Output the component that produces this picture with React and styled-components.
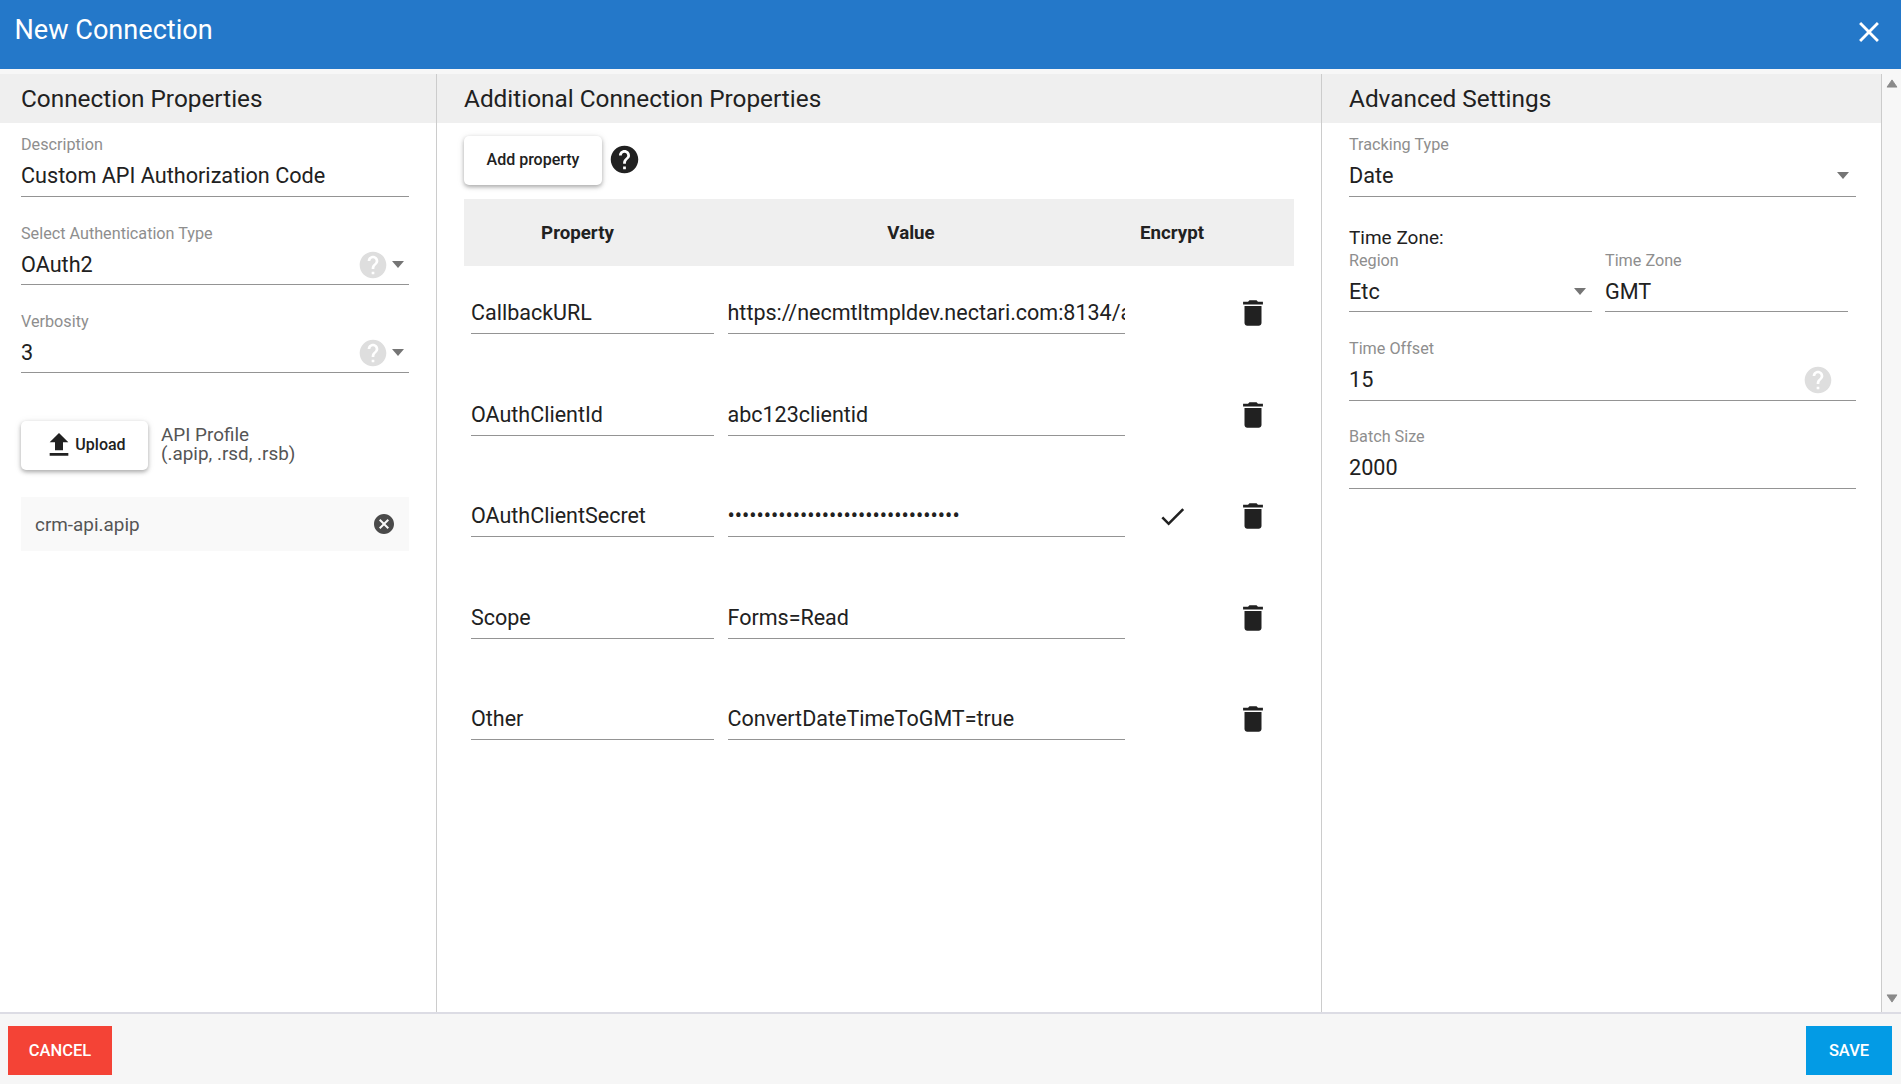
import React from "react";
import styled, { createGlobalStyle } from "styled-components";
import { MdDelete, MdCheck, MdHelp, MdClose, MdFileUpload, MdCancel } from "react-icons/md";

const Global = createGlobalStyle`
  html, body { margin: 0; padding: 0; height: 100%; overflow: hidden; background: #f7f7f7; }
  #root { height: 100%; }
  * { box-sizing: border-box; }
  body { font-family: Roboto, "Liberation Sans", sans-serif; color: #212121; }
`;

const Shell = styled.div`
  height: 1084px;
  display: flex;
  flex-direction: column;
`;
const TopBar = styled.header`
  height: 69px;
  flex: none;
  background: #2478c9;
  color: #fff;
  display: flex;
  justify-content: space-between;
  padding: 12px 15px 0 14.5px;
`;
const Title = styled.h1`
  margin: 0;
  font-size: 27.1px;
  line-height: 36px;
  font-weight: 400;
`;
const CloseButton = styled.button`
  border: 0;
  background: none;
  padding: 0;
  width: 34px;
  height: 34px;
  margin: 3px 0 0;
  color: #fff;
  font-size: 34px;
  display: flex;
`;
const Main = styled.main`
  flex: 1;
  min-height: 0;
  margin-top: 5px;
  display: flex;
`;
const Panel = styled.section`
  width: ${(p) => p.$width}px;
  flex: none;
  background: #fff;
  border-right: 1px solid #ccc;
`;
const PanelTitle = styled.h2`
  margin: 0;
  height: 49px;
  background: #efefef;
  font-size: 24.35px;
  line-height: 50px;
  font-weight: 400;
  padding-left: ${(p) => p.$inset}px;
`;
const PanelBody = styled.div`
  padding: ${(p) => p.$top}px ${(p) => p.$right}px 0 ${(p) => p.$left}px;
`;
const Field = styled.div`
  height: ${(p) => p.$height || 64}px;
  margin-bottom: ${(p) => p.$gap ?? 24}px;
  border-bottom: 1px solid #949494;
`;
const FieldLabel = styled.div`
  font-size: 16.2px;
  line-height: 24px;
  height: ${(p) => (p.$late ? 25 : 24)}px;
  padding-top: ${(p) => (p.$late ? 1 : 0)}px;
  color: #8e8e8e;
`;
const FieldRow = styled.div`
  display: flex;
  align-items: center;
  height: 37px;
`;
const FieldValue = styled.div`
  flex: 1;
  min-width: 0;
  font-size: 21.65px;
  line-height: 37px;
`;
const HintIcon = styled(MdHelp)`
  flex: none;
  font-size: 32px;
  color: #dedede;
  margin-right: ${(p) => p.$end || 3}px;
`;
const Caret = styled.svg`
  flex: none;
  width: 12px;
  height: 7px;
  margin-right: ${(p) => p.$end}px;
  fill: #757575;
`;
const UploadRow = styled.div`
  display: flex;
  align-items: center;
  gap: 13px;
  margin-top: 48px;
`;
const RaisedButton = styled.button`
  width: ${(p) => p.$width}px;
  height: 49px;
  flex: none;
  border: 0;
  border-radius: 5px;
  background: #fff;
  color: #212121;
  font: 500 16px Roboto, sans-serif;
  box-shadow: 0 2px 4px rgba(0, 0, 0, 0.3), 0 1px 8px rgba(0, 0, 0, 0.08);
  display: flex;
  align-items: center;
  justify-content: center;
  padding: 0 0 2px;
`;
const UploadGlyph = styled(MdFileUpload)`
  font-size: 32px;
`;
const UploadHint = styled.div`
  font-size: 18.9px;
  line-height: 19.5px;
  padding-bottom: 3px;
  color: #555;
`;
const FileChip = styled.div`
  margin-top: 27px;
  height: 54px;
  background: #f9f9f9;
  display: flex;
  align-items: center;
  justify-content: space-between;
  padding: 0 13px 0 14px;
  font-size: 18.9px;
  color: #555;
`;
const RemoveGlyph = styled(MdCancel)`
  font-size: 24px;
  color: #4a4a4a;
`;
const AddRow = styled.div`
  display: flex;
  align-items: center;
  gap: 6px;
`;
const DarkHelp = styled(MdHelp)`
  font-size: 33px;
  color: #212121;
  margin-bottom: 2px;
`;
const TableHead = styled.div`
  margin-top: 14px;
  height: 67px;
  background: #efefef;
  display: grid;
  grid-template-columns: 227px 440px 82px 81px;
  align-items: center;
  text-align: center;
  font-size: 18.7px;
  font-weight: 700;
`;
const RowList = styled.div`
  padding-top: 27px;
`;
const PropertyRow = styled.div`
  height: 101.5px;
  padding-left: 7px;
  display: grid;
  grid-template-columns: 243px 14px 397px 94px 68px;
  align-items: start;
`;
const CellInput = styled.div`
  grid-column: ${(p) => p.$col};
  height: 41px;
  border-bottom: 1px solid #949494;
  font-size: 21.5px;
  line-height: 40px;
  white-space: nowrap;
  overflow: hidden;
`;
const ValueInput = styled(CellInput)`
  text-indent: -0.5px;
`;
const IconCell = styled.div`
  grid-column: ${(p) => p.$col};
  height: 40px;
  display: flex;
  align-items: center;
  justify-content: center;
  color: #212121;
  font-size: ${(p) => p.$size}px;
`;
const TwoFields = styled.div`
  display: grid;
  grid-template-columns: 243px 243px;
  column-gap: 13px;
`;
const GroupTitle = styled.div`
  margin-top: 29px;
  height: 23px;
  font-size: 19px;
  line-height: 24px;
`;
const Scrollbar = styled.div`
  flex: 1;
  background: #f7f7f7;
  display: flex;
  flex-direction: column;
  justify-content: space-between;
  align-items: center;
  padding: 5px 0 9px;
`;
const ScrollArrow = styled.svg`
  width: 12px;
  height: 9px;
  fill: #8a8a8a;
  stroke: #8a8a8a;
  stroke-width: 1;
  stroke-linejoin: round;
`;
const Footer = styled.footer`
  height: 72px;
  flex: none;
  background: #f6f6f6;
  border-top: 2px solid #dcdce4;
  display: flex;
  justify-content: space-between;
  padding: 12px 9px 0 8px;
`;
const FlatButton = styled.button`
  width: ${(p) => p.$width}px;
  height: 49px;
  border: 0;
  background: ${(p) => p.$color};
  color: #fff;
  font: 500 16.5px Roboto, sans-serif;
  padding: 0;
`;

const CaretDown = ({ end = 6 }) => (
  <Caret $end={end} viewBox="0 0 12 7"><path d="M0 0h12L6 7z" /></Caret>
);

const rows = [
  { name: "CallbackURL", value: "https://necmtltmpldev.nectari.com:8134/api/oauth/callback" },
  { name: "OAuthClientId", value: "abc123clientid" },
  { name: "OAuthClientSecret", value: "•".repeat(32), secret: true },
  { name: "Scope", value: "Forms=Read" },
  { name: "Other", value: "ConvertDateTimeToGMT=true" },
];

export default function App() {
  return (
    <Shell>
      <Global />
      <TopBar>
        <Title>New Connection</Title>
        <CloseButton aria-label="Close"><MdClose /></CloseButton>
      </TopBar>
      <Main>
        <Panel $width={437}>
          <PanelTitle $inset={21}>Connection Properties</PanelTitle>
          <PanelBody $top={10} $left={21} $right={27}>
            <Field>
              <FieldLabel>Description</FieldLabel>
              <FieldRow><FieldValue>Custom API Authorization Code</FieldValue></FieldRow>
            </Field>
            <Field>
              <FieldLabel $late>Select Authentication Type</FieldLabel>
              <FieldRow><FieldValue>OAuth2</FieldValue><HintIcon /><CaretDown end={5} /></FieldRow>
            </Field>
            <Field>
              <FieldLabel $late>Verbosity</FieldLabel>
              <FieldRow><FieldValue>3</FieldValue><HintIcon /><CaretDown end={5} /></FieldRow>
            </Field>
            <UploadRow>
              <RaisedButton $width={127}><UploadGlyph />Upload</RaisedButton>
              <UploadHint>API Profile<br />(.apip, .rsd, .rsb)</UploadHint>
            </UploadRow>
            <FileChip>crm-api.apip<RemoveGlyph /></FileChip>
          </PanelBody>
        </Panel>
        <Panel $width={885}>
          <PanelTitle $inset={27}>Additional Connection Properties</PanelTitle>
          <PanelBody $top={13} $left={27} $right={27}>
            <AddRow>
              <RaisedButton $width={138}>Add property</RaisedButton>
              <DarkHelp />
            </AddRow>
            <TableHead>
              <div>Property</div>
              <div>Value</div>
              <div>Encrypt</div>
            </TableHead>
            <RowList>
              {rows.map((r) => (
                <PropertyRow key={r.name}>
                  <CellInput $col={1}>{r.name}</CellInput>
                  <ValueInput $col={3}>{r.value}</ValueInput>
                  {r.secret && <IconCell $col={4} $size={31}><MdCheck /></IconCell>}
                  <IconCell $col={5} $size={34}><MdDelete /></IconCell>
                </PropertyRow>
              ))}
            </RowList>
          </PanelBody>
        </Panel>
        <Panel $width={560}>
          <PanelTitle $inset={27}>Advanced Settings</PanelTitle>
          <PanelBody $top={10} $left={27} $right={25}>
            <Field $gap={0}>
              <FieldLabel>Tracking Type</FieldLabel>
              <FieldRow><FieldValue>Date</FieldValue><CaretDown end={7} /></FieldRow>
            </Field>
            <GroupTitle>Time Zone:</GroupTitle>
            <TwoFields>
              <Field $height={63} $gap={25}>
                <FieldLabel>Region</FieldLabel>
                <FieldRow><FieldValue>Etc</FieldValue><CaretDown /></FieldRow>
              </Field>
              <Field $height={63} $gap={25}>
                <FieldLabel>Time Zone</FieldLabel>
                <FieldRow><FieldValue>GMT</FieldValue></FieldRow>
              </Field>
            </TwoFields>
            <Field>
              <FieldLabel>Time Offset</FieldLabel>
              <FieldRow><FieldValue>15</FieldValue><HintIcon $end={22} /></FieldRow>
            </Field>
            <Field>
              <FieldLabel>Batch Size</FieldLabel>
              <FieldRow><FieldValue>2000</FieldValue></FieldRow>
            </Field>
          </PanelBody>
        </Panel>
        <Scrollbar>
          <ScrollArrow viewBox="-1 -1 13 10"><path d="M5.5 0L11 8H0z" /></ScrollArrow>
          <ScrollArrow viewBox="-1 -1 13 10"><path d="M0 0h11L5.5 8z" /></ScrollArrow>
        </Scrollbar>
      </Main>
      <Footer>
        <FlatButton $width={104} $color="#f44336">CANCEL</FlatButton>
        <FlatButton $width={86} $color="#039be5">SAVE</FlatButton>
      </Footer>
    </Shell>
  );
}
